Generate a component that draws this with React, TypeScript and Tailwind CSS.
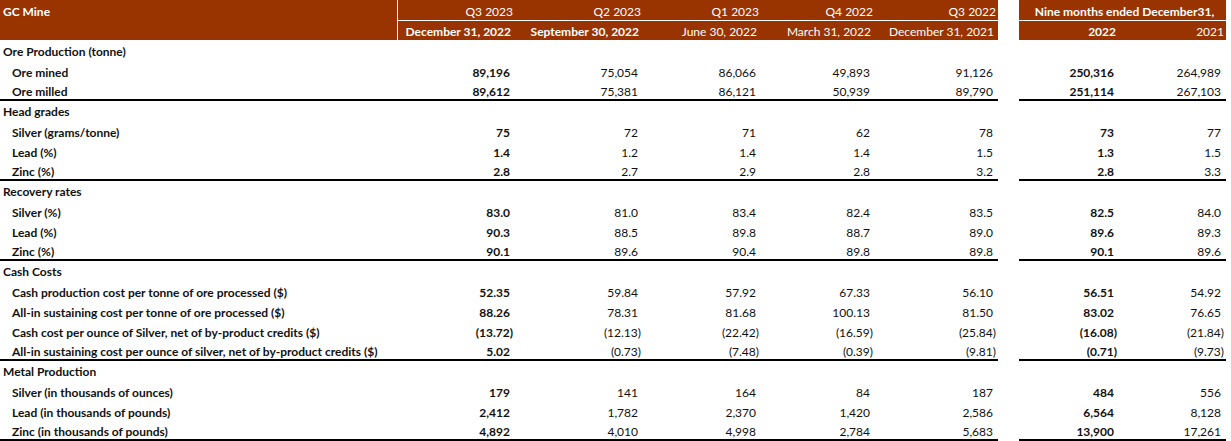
import React from "react";

type Row = [string, string, string, string, string, string, string, string];

const sections: { title: string; rows: Row[] }[] = [
  {
    title: "Ore Production (tonne)",
    rows: [
      ["Ore mined", "89,196", "75,054", "86,066", "49,893", "91,126", "250,316", "264,989"],
      ["Ore milled", "89,612", "75,381", "86,121", "50,939", "89,790", "251,114", "267,103"],
    ],
  },
  {
    title: "Head grades",
    rows: [
      ["Silver (grams/tonne)", "75", "72", "71", "62", "78", "73", "77"],
      ["Lead (%)", "1.4", "1.2", "1.4", "1.4", "1.5", "1.3", "1.5"],
      ["Zinc (%)", "2.8", "2.7", "2.9", "2.8", "3.2", "2.8", "3.3"],
    ],
  },
  {
    title: "Recovery rates",
    rows: [
      ["Silver (%)", "83.0", "81.0", "83.4", "82.4", "83.5", "82.5", "84.0"],
      ["Lead (%)", "90.3", "88.5", "89.8", "88.7", "89.0", "89.6", "89.3"],
      ["Zinc (%)", "90.1", "89.6", "90.4", "89.8", "89.8", "90.1", "89.6"],
    ],
  },
  {
    title: "Cash Costs",
    rows: [
      ["Cash production cost per tonne of ore processed ($)", "52.35", "59.84", "57.92", "67.33", "56.10", "56.51", "54.92"],
      ["All-in sustaining cost per tonne of ore processed ($)", "88.26", "78.31", "81.68", "100.13", "81.50", "83.02", "76.65"],
      ["Cash cost per ounce of Silver, net of by-product credits ($)", "(13.72)", "(12.13)", "(22.42)", "(16.59)", "(25.84)", "(16.08)", "(21.84)"],
      ["All-in sustaining cost per ounce of silver, net of by-product credits ($)", "5.02", "(0.73)", "(7.48)", "(0.39)", "(9.81)", "(0.71)", "(9.73)"],
    ],
  },
  {
    title: "Metal Production",
    rows: [
      ["Silver (in thousands of ounces)", "179", "141", "164", "84", "187", "484", "556"],
      ["Lead (in thousands of pounds)", "2,412", "1,782", "2,370", "1,420", "2,586", "6,564", "8,128"],
      ["Zinc (in thousands of pounds)", "4,892", "4,010", "4,998", "2,784", "5,683", "13,900", "17,261"],
    ],
  },
];

const widths = ["w-[117px]", "w-[128px]", "w-[118px]", "w-[114px]", "w-[123px]"];

function Val({ v, w, bold }: { v: string; w: string; bold?: boolean }) {
  const neg = v.startsWith("(");
  return (
    <div className={`${w} h-full flex justify-end ${neg ? "pr-[2px]" : "pr-[5px]"} ${bold ? "font-bold" : ""}`}>
      {v}
    </div>
  );
}

function DataRow({
  label,
  vals,
  indent,
  line,
  afterLine,
}: {
  label: string;
  vals: string[];
  indent?: boolean;
  line?: boolean;
  afterLine?: boolean;
}) {
  const lb = line ? "border-b-2 border-black" : "";
  const h = line ? "h-[21px] pt-[6px]" : afterLine ? "h-[19px] pt-[5px]" : indent ? "h-[20px] pt-[7px]" : "h-[20px] pt-[6px]";
  return (
    <div className={`flex ${line ? "h-[21px]" : afterLine ? "h-[19px]" : "h-[20px]"}`}>
      <div className={`w-[398px] ${h} font-bold ${indent ? "pl-[12px]" : "pl-[3px]"} ${lb}`}>{label}</div>
      <div className={`flex ${h} ${lb}`}>
        {widths.map((w, i) => (
          <Val key={i} v={vals[i] ?? ""} w={w} bold={i === 0} />
        ))}
      </div>
      <div className="w-[21px] h-full" />
      <div className={`flex ${h} ${lb}`}>
        <Val v={vals[5] ?? ""} w="w-[100px]" bold />
        <Val v={vals[6] ?? ""} w="w-[107px]" />
      </div>
    </div>
  );
}

export default function App() {
  return (
    <div
      className="w-[1231px] h-[441px] bg-white text-[#111] text-[12px] leading-none overflow-hidden"
      style={{ fontFamily: "Lato, 'Open Sans', sans-serif" }}
    >
      {/* Header */}
      <div className="flex h-[40px] text-white">
        <div className="w-[397px] h-full bg-[#993300] font-bold pl-[3px] pt-[6px]">GC Mine</div>
        <div className="w-[1px] h-full bg-white" />
        <div className="w-[600px] h-full flex flex-col">
          <div className="h-[20px] bg-[#993300] flex pt-[6px]">
            {[
              ["Q3 2023", "w-[117px]"],
              ["Q2 2023", "w-[128px]"],
              ["Q1 2023", "w-[118px]"],
              ["Q4 2022", "w-[114px]"],
              ["Q3 2022", "w-[123px]"],
            ].map(([t, w]) => (
              <div key={t} className={`${w} flex justify-end pr-[2px]`}>
                {t}
              </div>
            ))}
          </div>
          <div className="h-[1px] bg-white" />
          <div className="h-[19px] bg-[#993300] flex pt-[5px]">
            {[
              ["December 31, 2022", "w-[117px]", true],
              ["September 30, 2022", "w-[128px]", true],
              ["June 30, 2022", "w-[118px]", false],
              ["March 31, 2022", "w-[114px]", false],
              ["December 31, 2021", "w-[123px]", false],
            ].map(([t, w, b]) => (
              <div key={t as string} className={`${w} flex justify-end pr-[4px] ${b ? "font-bold" : ""}`}>
                {t as string}
              </div>
            ))}
          </div>
        </div>
        <div className="w-[21px] h-full" />
        <div className="w-[207px] h-full flex flex-col">
          <div className="h-[20px] bg-[#993300] flex justify-center pt-[6px] pl-[4px] font-bold">
            Nine months ended December31,
          </div>
          <div className="h-[1px] bg-white" />
          <div className="h-[19px] bg-[#993300] flex pt-[5px]">
            <div className="w-[100px] flex justify-end pr-[3px] font-bold">2022</div>
            <div className="w-[107px] flex justify-end pr-[2px]">2021</div>
          </div>
        </div>
      </div>

      {sections.map((s, si) => (
        <div key={s.title}>
          <DataRow label={s.title} vals={[]} afterLine={si > 0} />
          {s.rows.map((r, i) => (
            <DataRow key={r[0]} label={r[0]} vals={r.slice(1)} indent line={i === s.rows.length - 1} />
          ))}
        </div>
      ))}
    </div>
  );
}
